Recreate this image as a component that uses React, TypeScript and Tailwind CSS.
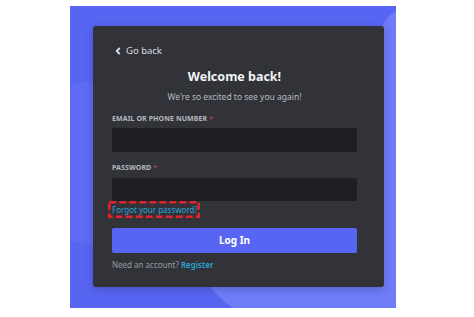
import { ChevronLeft } from 'lucide-react';

function Backdrop() {
  return (
    <svg
      className="absolute inset-0"
      width="326"
      height="302"
      viewBox="0 0 326 302"
      aria-hidden
    >
      <rect width="326" height="302" fill="#5865f2" />
      <path d="M0 80 C 30 70, 60 75, 80 90 L 80 230 C 50 240, 20 238, 0 236 Z" fill="#5f6bf4" />
      <circle cx="235" cy="200" r="125" fill="#6f7cf8" />
      <rect x="200" y="200" width="200" height="200" fill="#6f7cf8" />
      <rect x="312" y="4" width="60" height="400" rx="22" fill="#6f7cf8" />
    </svg>
  );
}

export default function App() {
  return (
    <div
      className="w-[474px] h-[317px] bg-white pl-[70px] pt-[6px]"
      style={{ fontFamily: '"Noto Sans", "Open Sans", sans-serif' }}
    >
      <div className="relative w-[326px] h-[302px] overflow-hidden">
        <Backdrop />
        <div className="relative ml-[23px] mt-[20px] w-[291px] h-[261px] bg-[#313338] rounded-[3px] shadow-[0_2px_10px_rgba(0,0,0,0.2)] pl-[19px] pr-[27px] pt-[19px]">
          <div className="h-[12px] flex items-center text-[9.5px] text-[#dbdee1]">
            <ChevronLeft size={10} strokeWidth={4.5} className="ml-[1px] mr-[3px]" />
            <span>Go back</span>
          </div>

          <h1 className="mt-[11px] h-[18px] leading-[18px] text-center text-[12.5px] font-bold text-[#f2f3f5]">
            Welcome back!
          </h1>
          <p className="mt-[5px] h-[12px] leading-[12px] text-center text-[8.5px] text-[#b5bac1]">
            We're so excited to see you again!
          </p>

          <div className="mt-[11px] h-[10px] leading-[10px] text-[7px] font-bold uppercase tracking-[0.1px] text-[#b5bac1]">
            Email or Phone Number <span className="text-[#a3474d]">*</span>
          </div>
          <div className="mt-[4px] h-[24px] bg-[#1e1f22] rounded-[2px]" />

          <div className="mt-[11px] h-[10px] leading-[10px] text-[7px] font-bold uppercase tracking-[0.1px] text-[#b5bac1]">
            Password <span className="text-[#a3474d]">*</span>
          </div>
          <div className="mt-[5px] h-[23px] bg-[#1e1f22] rounded-[2px]" />

          <div className="relative h-[17px] flex items-center">
            <span className="text-[8px] text-[#2aa3d9]">Forgot your password?</span>
            <svg
              className="absolute left-[-4px] top-0"
              width="92"
              height="17"
              viewBox="0 0 92 17"
              aria-hidden
            >
              <rect
                x="1.25"
                y="1.25"
                width="89.5"
                height="14.5"
                fill="none"
                stroke="#e3202b"
                strokeWidth="2.5"
                strokeDasharray="7 3"
              />
            </svg>
          </div>

          <button className="mt-[10px] w-full h-[25px] bg-[#5865f2] rounded-[2px] text-[10px] font-bold text-white">
            Log In
          </button>

          <p className="mt-[6px] h-[12px] leading-[12px] text-[8px] text-[#949ba4]">
            Need an account? <span className="font-semibold text-[#2aa3d9]">Register</span>
          </p>
        </div>
      </div>
    </div>
  );
}
